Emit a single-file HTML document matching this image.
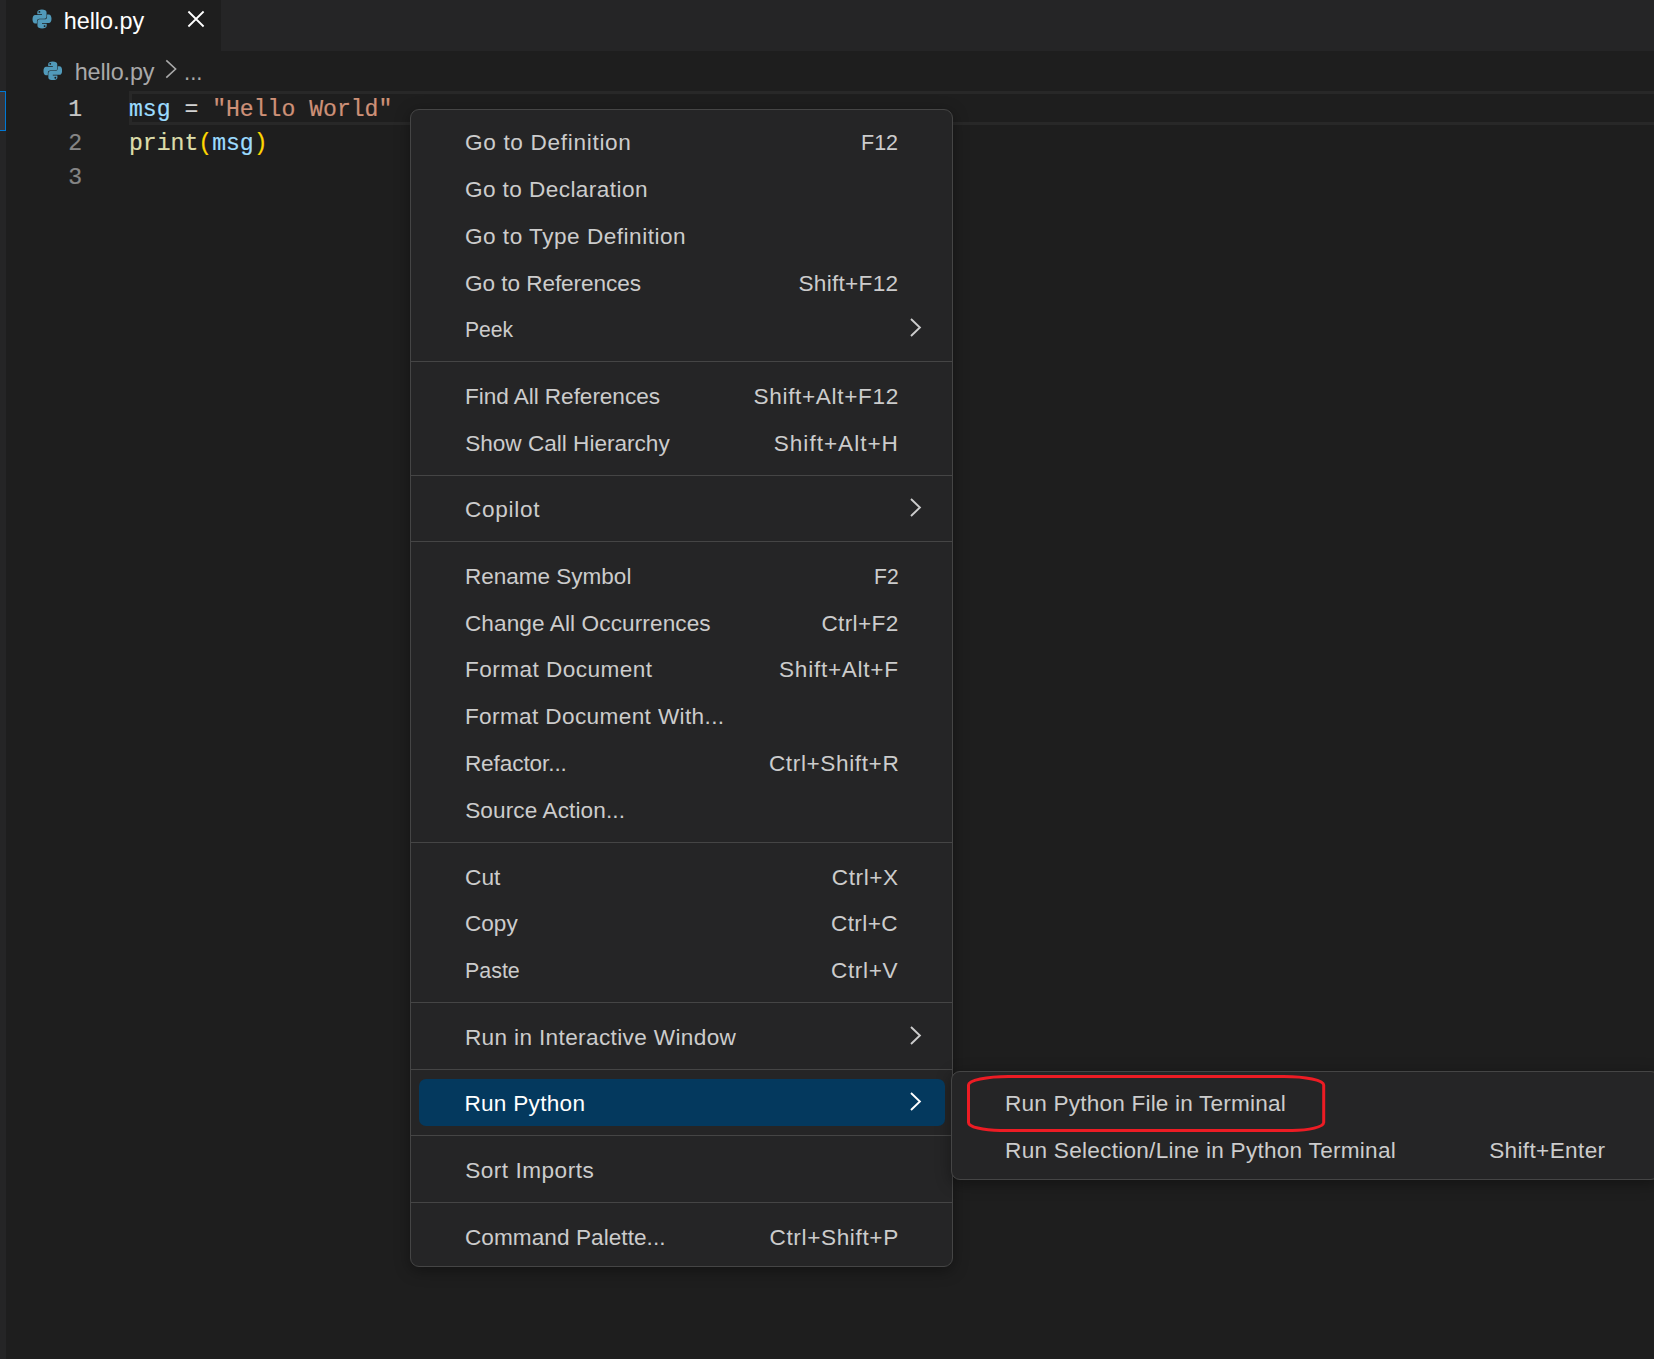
<!DOCTYPE html>
<html><head><meta charset="utf-8">
<style>
*{box-sizing:border-box;margin:0;padding:0}
html,body{width:1654px;height:1359px;overflow:hidden;background:#1e1e1e}
body{position:relative;font-family:"Liberation Sans",sans-serif;color:#ccc}
.abs{position:absolute}
#strip{left:0;top:0;width:6px;height:1359px;background:#252526}
#stripsel{left:-2px;top:91px;width:8px;height:40px;background:#37373d;border:1px solid #0078d4}
#tabbar{left:6px;top:0;width:1648px;height:51px;background:#252526}
#tab{left:6px;top:0;width:215px;height:51px;background:#1e1e1e}
.t{position:absolute;white-space:pre;line-height:1}
#linehl{left:128.8px;top:91px;width:1530px;height:34.2px;border:3.5px solid #282828}
.code{font-family:"Liberation Mono",monospace;-webkit-text-stroke:0.2px}
.menu{position:absolute;background:#252526;border:1px solid #454545;border-radius:9px;box-shadow:0 3.6px 14.4px rgba(0,0,0,.36)}
.sep{position:absolute;height:1px;background:#454545}
.sel{position:absolute;background:#04395e;border-radius:7px}
</style></head><body>
<div id="strip" class="abs"></div>
<div id="stripsel" class="abs"></div>
<div id="tabbar" class="abs"></div>
<div id="tab" class="abs"></div>
<svg class="abs" style="left:32.1px;top:9.4px" width="20" height="20" viewBox="0 0 20 20"><g fill="#519aba" fill-rule="evenodd"><path d="M5.3 3.2C5.3 1.4 7.2.5 9.9.5S14.55 1.4 14.55 3.2V7.7A2.05 2.05 0 0 1 12.5 9.75H7.5A2.55 2.55 0 0 0 4.95 12.3V14.6H3.2C1.4 14.6.5 12.7.5 10.25S1.4 5.9 3.2 5.9H10V5.2H5.3ZM7.4 1.95A.95.95 0 1 0 7.4 3.85A.95.95 0 1 0 7.4 1.95Z"/><path transform="rotate(180 10 10)" d="M5.3 3.2C5.3 1.4 7.2.5 9.9.5S14.55 1.4 14.55 3.2V7.7A2.05 2.05 0 0 1 12.5 9.75H7.5A2.55 2.55 0 0 0 4.95 12.3V14.6H3.2C1.4 14.6.5 12.7.5 10.25S1.4 5.9 3.2 5.9H10V5.2H5.3ZM7.4 1.95A.95.95 0 1 0 7.4 3.85A.95.95 0 1 0 7.4 1.95Z"/></g></svg>
<svg class="abs" style="left:42.8px;top:60.6px" width="19.6" height="19.6" viewBox="0 0 20 20"><g fill="#519aba" fill-rule="evenodd"><path d="M5.3 3.2C5.3 1.4 7.2.5 9.9.5S14.55 1.4 14.55 3.2V7.7A2.05 2.05 0 0 1 12.5 9.75H7.5A2.55 2.55 0 0 0 4.95 12.3V14.6H3.2C1.4 14.6.5 12.7.5 10.25S1.4 5.9 3.2 5.9H10V5.2H5.3ZM7.4 1.95A.95.95 0 1 0 7.4 3.85A.95.95 0 1 0 7.4 1.95Z"/><path transform="rotate(180 10 10)" d="M5.3 3.2C5.3 1.4 7.2.5 9.9.5S14.55 1.4 14.55 3.2V7.7A2.05 2.05 0 0 1 12.5 9.75H7.5A2.55 2.55 0 0 0 4.95 12.3V14.6H3.2C1.4 14.6.5 12.7.5 10.25S1.4 5.9 3.2 5.9H10V5.2H5.3ZM7.4 1.95A.95.95 0 1 0 7.4 3.85A.95.95 0 1 0 7.4 1.95Z"/></g></svg>
<svg class="abs" style="left:185.6px;top:8.6px" width="20" height="20" viewBox="0 0 20 20"><path d="M2 2.1L18 17.9M18 2.1L2 17.9" stroke="#fff" stroke-width="1.9" fill="none" transform="translate(10 10) scale(0.95) translate(-10 -10)"/></svg>
<svg class="abs" style="left:163.9px;top:59.4px" width="14" height="20" viewBox="0 0 14 20"><path d="M2.3 1.3L11.6 10L2.3 18.7" stroke="#a9a9a9" stroke-width="1.6" fill="none"/></svg>
<div id="linehl" class="abs"></div>
<div class="menu" style="left:410px;top:109px;width:543px;height:1158px"></div>
<div class="sep" style="left:411px;top:361px;width:541px"></div>
<div class="sep" style="left:411px;top:475px;width:541px"></div>
<div class="sep" style="left:411px;top:541px;width:541px"></div>
<div class="sep" style="left:411px;top:842px;width:541px"></div>
<div class="sep" style="left:411px;top:1002px;width:541px"></div>
<div class="sep" style="left:411px;top:1069px;width:541px"></div>
<div class="sep" style="left:411px;top:1135px;width:541px"></div>
<div class="sep" style="left:411px;top:1202px;width:541px"></div>
<div class="menu" style="left:951px;top:1071px;width:709px;height:109px"></div>
<div class="sel" style="left:419px;top:1079px;width:526px;height:47px"></div>
<div class="t" id="l0" style="left:464.95px;top:131.97px;font-size:22.6px;letter-spacing:0.682px;color:#cccccc;">Go to Definition</div>
<div class="t" id="k0" style="left:861.00px;top:131.97px;font-size:22.6px;letter-spacing:0.000px;color:#cccccc;transform:scaleX(0.9517);transform-origin:0 0;">F12</div>
<div class="t" id="l1" style="left:464.95px;top:178.77px;font-size:22.6px;letter-spacing:0.420px;color:#cccccc;">Go to Declaration</div>
<div class="t" id="l2" style="left:464.95px;top:225.57px;font-size:22.6px;letter-spacing:0.506px;color:#cccccc;">Go to Type Definition</div>
<div class="t" id="l3" style="left:464.95px;top:272.97px;font-size:22.6px;letter-spacing:-0.058px;color:#cccccc;">Go to References</div>
<div class="t" id="k3" style="left:798.46px;top:272.97px;font-size:22.6px;letter-spacing:0.288px;color:#cccccc;">Shift+F12</div>
<div class="t" id="l4" style="left:465.21px;top:319.17px;font-size:22.6px;letter-spacing:0.000px;color:#cccccc;transform:scaleX(0.9352);transform-origin:0 0;">Peek</div>
<svg class="abs" style="left:908.85px;top:317.10px" width="12.90" height="21.00" viewBox="-2 -2 12.90 21.00"><path d="M0 0L8.9 8.5L0 17.0" stroke="#cccccc" stroke-width="1.9" fill="none"/></svg>
<div class="t" id="l5" style="left:464.92px;top:385.77px;font-size:22.6px;letter-spacing:-0.048px;color:#cccccc;">Find All References</div>
<div class="t" id="k5" style="left:753.56px;top:385.77px;font-size:22.6px;letter-spacing:0.650px;color:#cccccc;">Shift+Alt+F12</div>
<div class="t" id="l6" style="left:465.20px;top:432.57px;font-size:22.6px;letter-spacing:-0.007px;color:#cccccc;">Show Call Hierarchy</div>
<div class="t" id="k6" style="left:773.76px;top:432.57px;font-size:22.6px;letter-spacing:0.990px;color:#cccccc;">Shift+Alt+H</div>
<div class="t" id="l7" style="left:464.95px;top:499.17px;font-size:22.6px;letter-spacing:0.725px;color:#cccccc;">Copilot</div>
<svg class="abs" style="left:908.85px;top:497.10px" width="12.90" height="21.00" viewBox="-2 -2 12.90 21.00"><path d="M0 0L8.9 8.5L0 17.0" stroke="#cccccc" stroke-width="1.9" fill="none"/></svg>
<div class="t" id="l8" style="left:464.92px;top:565.77px;font-size:22.6px;letter-spacing:0.000px;color:#cccccc;transform:scaleX(0.9962);transform-origin:0 0;">Rename Symbol</div>
<div class="t" id="k8" style="left:873.86px;top:565.77px;font-size:22.6px;letter-spacing:0.000px;color:#cccccc;transform:scaleX(0.9333);transform-origin:0 0;">F2</div>
<div class="t" id="l9" style="left:464.95px;top:612.57px;font-size:22.6px;letter-spacing:0.099px;color:#cccccc;">Change All Occurrences</div>
<div class="t" id="k9" style="left:821.44px;top:612.57px;font-size:22.6px;letter-spacing:0.350px;color:#cccccc;">Ctrl+F2</div>
<div class="t" id="l10" style="left:464.92px;top:659.37px;font-size:22.6px;letter-spacing:0.456px;color:#cccccc;">Format Document</div>
<div class="t" id="k10" style="left:779.08px;top:659.37px;font-size:22.6px;letter-spacing:0.718px;color:#cccccc;">Shift+Alt+F</div>
<div class="t" id="l11" style="left:464.92px;top:706.17px;font-size:22.6px;letter-spacing:0.369px;color:#cccccc;">Format Document With...</div>
<div class="t" id="l12" style="left:464.92px;top:752.97px;font-size:22.6px;letter-spacing:-0.098px;color:#cccccc;">Refactor...</div>
<div class="t" id="k12" style="left:768.94px;top:752.97px;font-size:22.6px;letter-spacing:0.614px;color:#cccccc;">Ctrl+Shift+R</div>
<div class="t" id="l13" style="left:465.20px;top:799.77px;font-size:22.6px;letter-spacing:0.104px;color:#cccccc;">Source Action...</div>
<div class="t" id="l14" style="left:464.70px;top:866.97px;font-size:22.6px;letter-spacing:0.000px;color:#cccccc;transform:scaleX(1.0052);transform-origin:0 0;">Cut</div>
<div class="t" id="k14" style="left:831.79px;top:866.97px;font-size:22.6px;letter-spacing:0.594px;color:#cccccc;">Ctrl+X</div>
<div class="t" id="l15" style="left:464.70px;top:913.17px;font-size:22.6px;letter-spacing:0.000px;color:#cccccc;transform:scaleX(0.9988);transform-origin:0 0;">Copy</div>
<div class="t" id="k15" style="left:830.94px;top:913.17px;font-size:22.6px;letter-spacing:0.420px;color:#cccccc;">Ctrl+C</div>
<div class="t" id="l16" style="left:465.00px;top:959.97px;font-size:22.6px;letter-spacing:0.000px;color:#cccccc;transform:scaleX(0.9479);transform-origin:0 0;">Paste</div>
<div class="t" id="k16" style="left:830.94px;top:959.97px;font-size:22.6px;letter-spacing:0.650px;color:#cccccc;">Ctrl+V</div>
<div class="t" id="l17" style="left:464.92px;top:1026.57px;font-size:22.6px;letter-spacing:0.356px;color:#cccccc;">Run in Interactive Window</div>
<svg class="abs" style="left:908.85px;top:1024.50px" width="12.90" height="21.00" viewBox="-2 -2 12.90 21.00"><path d="M0 0L8.9 8.5L0 17.0" stroke="#cccccc" stroke-width="1.9" fill="none"/></svg>
<div class="t" id="l18" style="left:464.40px;top:1093.17px;font-size:22.6px;letter-spacing:0.282px;color:#ffffff;">Run Python</div>
<svg class="abs" style="left:908.85px;top:1091.10px" width="12.90" height="21.00" viewBox="-2 -2 12.90 21.00"><path d="M0 0L8.9 8.5L0 17.0" stroke="#ffffff" stroke-width="1.9" fill="none"/></svg>
<div class="t" id="l19" style="left:465.20px;top:1159.77px;font-size:22.6px;letter-spacing:0.507px;color:#cccccc;">Sort Imports</div>
<div class="t" id="l20" style="left:464.95px;top:1226.97px;font-size:22.6px;letter-spacing:0.056px;color:#cccccc;">Command Palette...</div>
<div class="t" id="k20" style="left:769.52px;top:1226.97px;font-size:22.6px;letter-spacing:0.627px;color:#cccccc;">Ctrl+Shift+P</div>
<div class="t" id="l21" style="left:1005.09px;top:1093.17px;font-size:22.6px;letter-spacing:0.184px;color:#cccccc;">Run Python File in Terminal</div>
<div class="t" id="l22" style="left:1005.09px;top:1139.97px;font-size:22.6px;letter-spacing:0.258px;color:#cccccc;">Run Selection/Line in Python Terminal</div>
<div class="t" id="k22" style="left:1489.14px;top:1139.97px;font-size:22.6px;letter-spacing:0.356px;color:#cccccc;">Shift+Enter</div>
<div class="t" id="tabtitle" style="left:63.63px;top:9.89px;font-size:23.4px;letter-spacing:0.010px;color:#ffffff;">hello.py</div>
<div class="t" id="bc" style="left:74.67px;top:61.19px;font-size:23.4px;letter-spacing:-0.106px;color:#a9a9a9;">hello.py</div>
<div class="t" id="bcdots" style="left:183.72px;top:61.19px;font-size:23.4px;letter-spacing:0.000px;color:#a9a9a9;transform:scaleX(0.9440);transform-origin:0 0;">...</div>
<div class="t code" style="left:52px;top:98.9px;width:30px;text-align:right;font-size:23.1px;color:#c6c6c6">1</div>
<div class="t code" style="left:52px;top:133.1px;width:30px;text-align:right;font-size:23.1px;color:#858585">2</div>
<div class="t code" style="left:52px;top:166.6px;width:30px;text-align:right;font-size:23.1px;color:#858585">3</div>
<div class="t code" id="c1" style="left:129px;top:98.9px;font-size:23.1px"><span style="color:#9cdcfe">msg</span><span style="color:#d4d4d4"> = </span><span style="color:#ce9178">"Hello World"</span></div>
<div class="t code" id="c2" style="left:129px;top:133.1px;font-size:23.1px"><span style="color:#dcdcaa">print</span><span style="color:#ffd700">(</span><span style="color:#9cdcfe">msg</span><span style="color:#ffd700">)</span></div>
<svg class="abs" style="left:960px;top:1068px" width="380" height="72" viewBox="960 1068 380 72"><path d="M1008.5 1076.5H1284A39.7 8.5 0 0 1 1323.7 1085V1122.5A31.7 8 0 0 1 1292 1130.4H1000.4A32 8 0 0 1 968.5 1122.4V1085A40 8.5 0 0 1 1008.5 1076.5Z" fill="none" stroke="#ed1c24" stroke-width="3"/></svg>
</body></html>
